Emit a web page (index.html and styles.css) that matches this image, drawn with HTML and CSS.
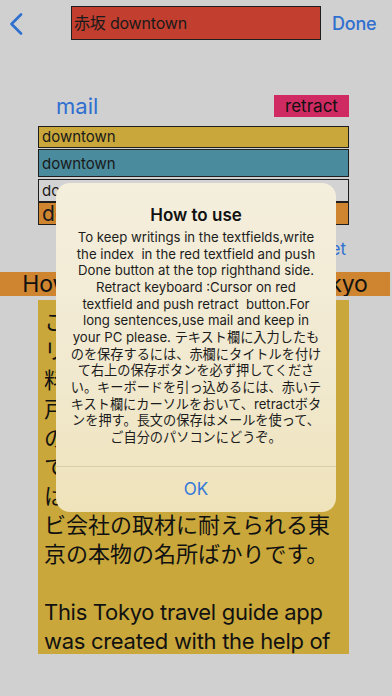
FILE: index.html
```html
<!DOCTYPE html>
<html lang="ja">
<head>
<meta charset="utf-8">
<link rel="stylesheet" href="styles.css">
</head>
<body>
<div class="screen">
  <header class="nav">
    <div class="back-cell">
      <svg class="back" width="14" height="22" viewBox="0 0 14 22"><polyline points="12,1.5 2.5,11 12,20.5" fill="none" stroke="#2f6fd0" stroke-width="2.6" stroke-linecap="round" stroke-linejoin="round"/></svg>
    </div>
    <div class="title-field">赤坂 downtown</div>
    <div class="done">Done</div>
  </header>

  <div class="tools">
    <span class="mail">mail</span>
    <span class="retract">retract</span>
  </div>

  <div class="fields">
    <div class="field f1">downtown</div>
    <div class="field f2">downtown</div>
    <div class="field f3">downtown</div>
    <div class="field f4">downtown</div>
  </div>

  <div class="reset-row"><span class="reset">Reset</span></div>

  <div class="banner">How to enjoy a real trip in Tokyo</div>

  <div class="memo">
    <p>このアプリは、東京在住のフ<br>リーライターが厳選した、無<br>料で楽しめる場所を中心に江<br>戸の歴史を感じる老舗や寺社<br>の数々を紹介しています。全<br>て実際に足を運んで確かめた<br>はずれなしの所。雑誌やテレ<br>ビ会社の取材に耐えられる東<br>京の本物の名所ばかりです。<br><br><span class="latin">This Tokyo travel guide app<br>was created with the help of<br>many people who love Tokyo.</span></p>
  </div>
</div>

<div class="alert">
  <div class="alert-body">
    <div class="alert-title">How to use</div>
    <div class="alert-msg">To keep writings in the textfields,write<br>the index &nbsp;in the red textfield and push<br>Done button at the top righthand side.<br>Retract keyboard :Cursor on red<br>textfield and push retract &nbsp;button.For<br>long sentences,use mail and keep in<br>your PC please. テキスト欄に入力したも<br>のを保存するには、赤欄にタイトルを付け<br>て右上の保存ボタンを必ず押してくださ<br>い。キーボードを引っ込めるには、赤いテ<br>キスト欄にカーソルをおいて、retractボタ<br>ンを押す。長文の保存はメールを使って、<br>ご自分のパソコンにどうぞ。</div>
  </div>
  <div class="alert-btn">OK</div>
</div>
</body>
</html>
```

FILE: styles.css
```css
* { box-sizing: border-box; }
html, body {
  margin: 0;
  padding: 0;
  width: 392px;
  height: 696px;
  overflow: hidden;
  background: #d0d0d0;
  font-family: Inter, "Noto Sans CJK JP", sans-serif;
  color: #111;
}
.screen {
  width: 392px;
  height: 696px;
  display: flex;
  flex-direction: column;
}
.nav {
  display: grid;
  grid-template-columns: 71px 250px 1fr;
  align-items: center;
  padding-top: 6px;
  height: 40px;
}
.back-cell {
  padding-left: 9px;
  display: flex;
  align-items: center;
  padding-top: 2px;
}
.title-field {
  height: 34px;
  background: #c23e2f;
  border: 1px solid #1e1e1e;
  font-size: 16px;
  line-height: 32px;
  padding-left: 2px;
  color: #1a1a1a;
  letter-spacing: -0.2px;
}
.done {
  font-size: 18px;
  font-weight: 500;
  color: #2f6fd0;
  padding-left: 11px;
  letter-spacing: -0.2px;
}
.tools {
  margin-top: 55px;
  display: flex;
  align-items: center;
  justify-content: space-between;
  padding-left: 56px;
  padding-right: 43px;
  height: 22px;
}
.mail {
  font-size: 22px;
  color: #2f6fd0;
  line-height: 22px;
}
.retract {
  background: #cf2b62;
  color: #111;
  font-size: 17px;
  width: 75px;
  height: 22px;
  line-height: 22px;
  text-align: center;
}
.fields {
  margin: 9px 0 0 38px;
  width: 311px;
  display: flex;
  flex-direction: column;
}
.field {
  border: 1px solid #1e1e1e;
  padding-left: 3px;
  font-size: 15px;
  color: #1a1a1a;
  overflow: hidden;
  white-space: nowrap;
}
.f1 { background: #c9a73b; height: 22px; line-height: 19px; }
.f2 { background: #4a8b9d; height: 28px; line-height: 27px; margin-top: 1px; }
.f3 { background: #d3d3d3; height: 23px; line-height: 21px; margin-top: 2px; }
.f4 { background: #cf8530; height: 23px; line-height: 21px; font-size: 21px; }
.reset-row {
  height: 47px;
  display: flex;
  justify-content: flex-end;
  align-items: center;
  padding-right: 46px;
}
.reset {
  font-size: 17px;
  color: #2f6fd0;
}
.banner {
  width: 390px;
  height: 24px;
  background: #cf8530;
  font-size: 23px;
  line-height: 24px;
  text-align: center;
  color: #111;
  white-space: nowrap;
  overflow: hidden;
  letter-spacing: -0.1px;
}
.memo {
  margin: 4px 0 0 38px;
  width: 311px;
  height: 354px;
  background: #c9a73b;
  overflow: hidden;
  padding: 8px 6px 0 6px;
}
.memo p {
  margin: 0;
  font-size: 22px;
  line-height: 29px;
  color: #111;
  white-space: nowrap;
}
.latin {
  letter-spacing: -0.3px;
}
.alert {
  position: absolute;
  left: 56px;
  top: 183px;
  width: 280px;
  height: 329px;
  border-radius: 14px;
  background: linear-gradient(#f4eedd, #f1e9cf 60%, #efe3ba);
  display: flex;
  flex-direction: column;
  overflow: hidden;
}
.alert-body {
  flex: 1;
  padding: 21px 6px 0 6px;
  text-align: center;
  border-bottom: 1px solid #d9cfae;
}
.alert-title {
  font-size: 17px;
  font-weight: 600;
  line-height: 22px;
  color: #111;
}
.alert-msg {
  margin-top: 3px;
  font-size: 13.2px;
  line-height: 16.67px;
  color: #1c1c1c;
  white-space: nowrap;
}
.alert-btn {
  height: 45px;
  line-height: 45px;
  text-align: center;
  font-size: 17px;
  color: #3478d8;
}
```
